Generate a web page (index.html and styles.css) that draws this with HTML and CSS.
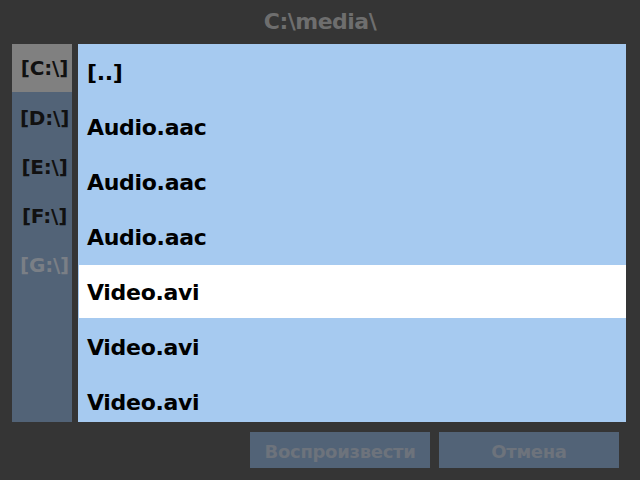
FILE: index.html
```html
<!DOCTYPE html>
<html>
<head>
<meta charset="utf-8">
<link rel="stylesheet" href="styles.css">
</head>
<body>
<div class="dialog">
  <div class="title">C:\media\</div>
  <div class="main">
    <div class="drives">
      <div class="drive active">[C:\]</div>
      <div class="drive first">[D:\]</div>
      <div class="drive">[E:\]</div>
      <div class="drive">[F:\]</div>
      <div class="drive disabled">[G:\]</div>
    </div>
    <div class="files">
      <div class="file">[..]</div>
      <div class="file">Audio.aac</div>
      <div class="file">Audio.aac</div>
      <div class="file">Audio.aac</div>
      <div class="file selected">Video.avi</div>
      <div class="file">Video.avi</div>
      <div class="file">Video.avi</div>
    </div>
  </div>
  <div class="buttons">
    <div class="btn">Воспроизвести</div>
    <div class="btn">Отмена</div>
  </div>
</div>
</body>
</html>
```
FILE: styles.css
```css
html, body {
  margin: 0;
  padding: 0;
  background: #353535;
}
body {
  width: 640px;
  height: 480px;
  overflow: hidden;
  font-family: "DejaVu Sans", sans-serif;
  font-weight: bold;
}
.dialog {
  display: flex;
  flex-direction: column;
  height: 480px;
}
.title {
  height: 44px;
  line-height: 44px;
  text-align: center;
  color: #6e6e6e;
  font-size: 22px;
  letter-spacing: -0.5px;
}
.main {
  display: flex;
  height: 378px;
  padding: 0 14px 0 12px;
  gap: 6px;
}
.drives {
  width: 60px;
  background: #526377;
  display: flex;
  flex-direction: column;
}
.drive {
  height: 49px;
  line-height: 49px;
  padding-left: 5px;
  text-align: center;
  font-size: 20px;
  letter-spacing: -0.2px;
  color: #111;
}
.drive.first {
  margin-top: 2px;
}
.drive.active {
  height: 48px;
  background: #808080;
}
.drive.disabled {
  color: #7a7f86;
}
.files {
  flex: 1;
  background: #a6caf0;
  overflow: hidden;
}
.file {
  height: 55px;
  line-height: 57px;
  padding-left: 9px;
  font-size: 22px;
  letter-spacing: -0.3px;
  color: #000;
}
.file.selected {
  background: #fff;
  height: 53px;
  line-height: 55px;
  margin: 1px 0 1px 1px;
  padding-left: 8px;
}
.buttons {
  display: flex;
  justify-content: flex-end;
  gap: 9px;
  padding: 10px 21px 0 0;
}
.btn {
  width: 180px;
  height: 36px;
  line-height: 39px;
  text-align: center;
  background: #526377;
  color: #6d737c;
  font-size: 18px;
  letter-spacing: -0.3px;
}
```
